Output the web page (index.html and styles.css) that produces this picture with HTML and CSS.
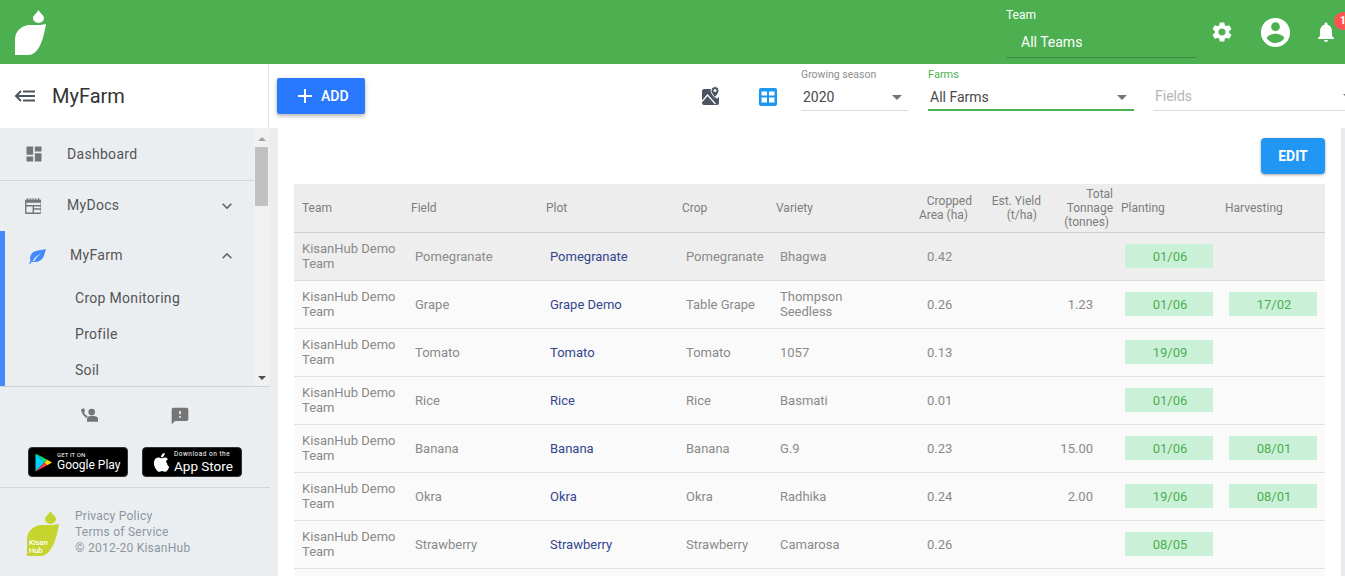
FILE: index.html
```html
<!DOCTYPE html>
<html lang="en">
<head>
<meta charset="utf-8">
<title>MyFarm</title>
<link rel="stylesheet" href="styles.css">
</head>
<body>
<div class="app">
  <header class="topbar">
    <svg class="logo" viewBox="0 0 32 46"><path d="M23.5 0C21.5 3.5 18 5.5 18 8a5.5 5 0 0 0 11 0C29 5.5 25.500 3.500 23.500 0z"/><path d="M31 14C24 15.500 20 15 13 15C6 16.500 0 21 0 30L0 45L13 45C23 45 28 32 31 14z"/></svg>
    <div class="team">
      <div class="team-label">Team</div>
      <div class="team-value">All Teams</div>
    </div>
    <svg class="ic-gear" viewBox="0 0 24 24"><path d="M19.14 12.94c.04-.3.06-.61.06-.94 0-.32-.02-.64-.07-.94l2.03-1.58c.18-.14.23-.41.12-.61l-1.92-3.32c-.12-.22-.37-.29-.59-.22l-2.39.96c-.5-.38-1.03-.7-1.62-.94l-.36-2.54c-.04-.24-.24-.41-.48-.41h-3.84c-.24 0-.43.17-.47.41l-.36 2.54c-.59.24-1.13.57-1.62.94l-2.39-.96c-.22-.08-.47 0-.59.22L2.74 8.87c-.12.21-.08.47.12.61l2.03 1.58c-.05.3-.09.63-.09.94s.02.64.07.94l-2.03 1.58c-.18.14-.23.41-.12.61l1.92 3.32c.12.22.37.29.59.22l2.39-.96c.5.38 1.03.7 1.62.94l.36 2.54c.05.24.24.41.48.41h3.84c.24 0 .44-.17.47-.41l.36-2.54c.59-.24 1.13-.56 1.62-.94l2.39.96c.22.08.47 0 .59-.22l1.92-3.32c.12-.22.07-.47-.12-.61l-2.01-1.58zM12 15.6c-1.98 0-3.6-1.62-3.6-3.6s1.62-3.6 3.6-3.6 3.6 1.62 3.6 3.6-1.62 3.6-3.6 3.6z"/></svg>
    <svg class="ic-account" viewBox="0 0 24 24"><path d="M12 2C6.48 2 2 6.48 2 12s4.48 10 10 10 10-4.48 10-10S17.52 2 12 2zm0 3c1.66 0 3 1.34 3 3s-1.34 3-3 3-3-1.34-3-3 1.34-3 3-3zm0 14.2c-2.5 0-4.71-1.28-6-3.22.03-1.99 4-3.08 6-3.08 1.99 0 5.97 1.09 6 3.08-1.29 1.94-3.5 3.22-6 3.22z"/></svg>
    <div class="bell">
      <svg viewBox="0 0 24 24"><path d="M12 22c1.100 0 2-.9 2-2h-4c0 1.100.9 2 2 2zm6-6v-5c0-3.070-1.630-5.640-4.500-6.320V4c0-.83-.67-1.500-1.500-1.500s-1.500.67-1.500 1.500v.68C7.640 5.360 6 7.920 6 11v5l-2 2v1h16v-1l-2-2z"/></svg>
      <span class="badge">1</span>
    </div>
  </header>

  <div class="subbar">
    <div class="page-title">
      <svg class="ic-back" viewBox="0 0 24 24"><path d="M8 7L3 12L8 17M3 12H22M10 7.500H22M10 16.500H22"/></svg>
      <span>MyFarm</span>
    </div>
    <div class="toolbar">
      <button class="btn-add"><svg viewBox="0 0 14 14"><path d="M6 0h2v6h6v2H8v6H6V8H0V6h6z"/></svg>ADD</button>
      <svg class="ic-map" viewBox="0 0 18 19"><path class="map-body" d="M2 3h9.500v5.500L15 13l2-2.500V17a2 2 0 0 1-2 2H2a2 2 0 0 1-2-2V5a2 2 0 0 1 2-2z"/><path class="map-line" d="M0 15.500L5.500 9L13.500 18"/><path class="map-pin" d="M13 0.500a4 4 0 0 0-4 4c0 2.800 4 7 4 7s4-4.200 4-7a4 4 0 0 0-4-4z"/><circle class="map-dot" cx="13" cy="4.500" r="1.500"/></svg>
      <svg class="ic-grid" viewBox="0 0 18 18"><path d="M2 0h14a2 2 0 0 1 2 2v14a2 2 0 0 1-2 2H2a2 2 0 0 1-2-2V2a2 2 0 0 1 2-2zm0.500 3.500v4H8v-4zm7.500 0v4h5.500v-4zM2.500 9.500v5H8v-5zm7.500 0v5h5.500v-5z" fill-rule="evenodd"/></svg>
      <div class="select select-season">
        <div class="select-label">Growing season</div>
        <div class="select-value"><span>2020</span><i class="caret"></i></div>
      </div>
      <div class="select select-farms">
        <div class="select-label">Farms</div>
        <div class="select-value"><span>All Farms</span><i class="caret"></i></div>
      </div>
      <div class="select select-fields">
        <div class="select-label">&nbsp;</div>
        <div class="select-value"><span>Fields</span><i class="caret"></i></div>
      </div>
    </div>
  </div>

  <div class="body">
    <aside class="sidebar">
      <div class="nav-wrap">
        <nav class="nav">
          <a class="nav-row nav-dash">
            <svg class="nav-ic" viewBox="0 0 24 24"><path d="M3 13h8V3H3v10zm0 8h8v-6H3v6zm10 0h8V11h-8v10zm0-18v6h8V3h-8z"/></svg>
            <span>Dashboard</span>
          </a>
          <a class="nav-row nav-docs">
            <svg class="nav-ic" viewBox="0 0 18 17"><path d="M1 1.500h1V0h1v1.500h2V0h1v1.500h2V0h1v1.500h2V0h1v1.500h2V0h1v1.500h1a1 1 0 0 1 1 1V16a1 1 0 0 1-1 1H1a1 1 0 0 1-1-1V2.500a1 1 0 0 1 1-1zM1.500 5v2.500h15V5zM1.500 9v6.500H8V9zm8 0v2h7V9zm0 3.500v3h7v-3z" fill-rule="evenodd"/></svg>
            <span>MyDocs</span>
            <svg class="chev" viewBox="0 0 24 24"><path d="M16.590 8.590L12 13.170 7.410 8.590 6 10l6 6 6-6z"/></svg>
          </a>
          <div class="nav-group">
            <a class="nav-row nav-farm">
              <svg class="leaf-ic" viewBox="0 0 18 16"><path d="M18 0C14 1.500 5 0.500 2 6C0.500 9 1 11 1.500 12.500L0 15.500L1.300 16L2.700 13.500C6 14.500 10 14 13 11.500C16 9 17 4 18 0zM4 12.500C6 9 9 6.500 13 4.500C10 7 7.500 9.500 5.500 13z" fill-rule="evenodd"/></svg>
              <span>MyFarm</span>
              <svg class="chev" viewBox="0 0 24 24"><path d="M12 8l-6 6 1.410 1.410L12 10.830l4.590 4.580L18 14z"/></svg>
            </a>
            <a class="nav-sub">Crop Monitoring</a>
            <a class="nav-sub">Profile</a>
            <a class="nav-sub">Soil</a>
          </div>
        </nav>
        <div class="scroll">
          <i class="scroll-up"></i>
          <div class="scroll-thumb"></div>
          <i class="scroll-down"></i>
        </div>
      </div>
      <div class="support">
        <div class="support-icons">
          <svg class="ic-callback" viewBox="0 0 18 18"><path d="M0 1.500L3 0L4 3L3 4.500C3.500 6 5 7.500 6.500 8L6 10C3 9 0.500 5 0 1.500z"/><circle cx="10.700" cy="4" r="3.300"/><path d="M6 13.700V10.500C6 8.700 8.500 7.700 11 7.700S17 8.700 17 10.500V13.700z"/></svg>
          <svg class="ic-feedback" viewBox="0 0 24 24"><path d="M20 2H4c-1.100 0-1.990.9-1.990 2L2 22l4-4h14c1.100 0 2-.9 2-2V4c0-1.100-.9-2-2-2zm-7 12h-2v-2h2v2zm0-4h-2V6h2v4z"/></svg>
        </div>
        <div class="stores">
          <a class="store">
            <svg class="play" viewBox="0 0 18 20"><path fill="#00d2ff" d="M0.500 0.500V19.500L10 10z"/><path fill="#00e676" d="M0.500 0.500L13 7L10 10z"/><path fill="#ff3a44" d="M0.500 19.500L13 13L10 10z"/><path fill="#ffd400" d="M13 7L18 10L13 13L10 10z"/></svg>
            <span class="store-text"><small>GET IT ON</small><b class="gp">Google Play</b></span>
          </a>
          <a class="store">
            <svg class="apple" viewBox="0 0 17 20"><path d="M14 10.500c0-2.200 1.800-3.200 1.900-3.300-1-1.500-2.600-1.700-3.200-1.700-1.300-.1-2.600.8-3.300.8s-1.700-.8-2.900-.8C5 5.500 3.500 6.400 2.700 7.800 1 10.700 2.300 15 4 17.300c.8 1.200 1.700 2.500 3 2.400 1.200 0 1.700-.8 3.100-.8s1.900.8 3.100.8 2.100-1.200 2.800-2.300c.9-1.300 1.300-2.600 1.300-2.700-.1 0-2.300-1-2.300-4zM11.800 4c.6-.8 1.100-1.900 1-3-1 0-2.100.6-2.800 1.400-.6.7-1.100 1.800-1 2.900 1.100.1 2.200-.6 2.800-1.300z"/></svg>
            <span class="store-text"><small class="wide">Download on the</small><b class="as">App Store</b></span>
          </a>
        </div>
      </div>
      <footer class="legal">
        <svg class="lime" viewBox="0 0 32 46"><path d="M23.500 0C21.500 3.500 18 5.500 18 8a5.500 5 0 0 0 11 0C29 5.500 25.500 3.500 23.500 0z"/><path d="M32 13C24 14.500 20 14 13 14C6 15.500 0 20 0 29L0 45L13 45C23 45 29 32 32 13z"/><text class="lime-text" x="2" y="34">Kisan</text><text class="lime-text" x="2" y="42">Hub</text></svg>
        <div class="legal-text">
          <div>Privacy Policy</div>
          <div>Terms of Service</div>
          <div>© 2012-20 KisanHub</div>
        </div>
      </footer>
    </aside>

    <main class="main">
      <div class="main-actions"><button class="btn-edit">EDIT</button></div>
      <table class="grid">
        <colgroup>
          <col class="c-team"><col class="c-field"><col class="c-plot"><col class="c-crop"><col class="c-variety"><col class="c-area"><col class="c-yield"><col class="c-ton"><col class="c-plant"><col class="c-harv">
        </colgroup>
        <thead>
          <tr>
            <th>Team</th><th>Field</th><th>Plot</th><th>Crop</th><th>Variety</th>
            <th class="th-r">Cropped<br><span class="off">Area (ha)</span></th>
            <th class="th-r">Est. Yield<br><span class="off">(t/ha)</span></th>
            <th class="th-r th-flush">Total<br>Tonnage<br><span class="off">(tonnes)</span></th>
            <th>Planting</th><th>Harvesting</th>
          </tr>
        </thead>
        <tbody>
          <tr class="active"><td class="t">KisanHub Demo<br>Team</td><td>Pomegranate</td><td class="plot">Pomegranate</td><td>Pomegranate</td><td>Bhagwa</td><td class="area">0.42</td><td></td><td class="ton"></td><td><div class="date">01/06</div></td><td></td></tr>
          <tr><td class="t">KisanHub Demo<br>Team</td><td>Grape</td><td class="plot">Grape Demo</td><td>Table Grape</td><td class="var">Thompson<br>Seedless</td><td class="area">0.26</td><td></td><td class="ton">1.23</td><td><div class="date">01/06</div></td><td><div class="date">17/02</div></td></tr>
          <tr><td class="t">KisanHub Demo<br>Team</td><td>Tomato</td><td class="plot">Tomato</td><td>Tomato</td><td>1057</td><td class="area">0.13</td><td></td><td class="ton"></td><td><div class="date">19/09</div></td><td></td></tr>
          <tr><td class="t">KisanHub Demo<br>Team</td><td>Rice</td><td class="plot">Rice</td><td>Rice</td><td>Basmati</td><td class="area">0.01</td><td></td><td class="ton"></td><td><div class="date">01/06</div></td><td></td></tr>
          <tr><td class="t">KisanHub Demo<br>Team</td><td>Banana</td><td class="plot">Banana</td><td>Banana</td><td>G.9</td><td class="area">0.23</td><td></td><td class="ton">15.00</td><td><div class="date">01/06</div></td><td><div class="date">08/01</div></td></tr>
          <tr><td class="t">KisanHub Demo<br>Team</td><td>Okra</td><td class="plot">Okra</td><td>Okra</td><td>Radhika</td><td class="area">0.24</td><td></td><td class="ton">2.00</td><td><div class="date">19/06</div></td><td><div class="date">08/01</div></td></tr>
          <tr><td class="t">KisanHub Demo<br>Team</td><td>Strawberry</td><td class="plot">Strawberry</td><td>Strawberry</td><td>Camarosa</td><td class="area">0.26</td><td></td><td class="ton"></td><td><div class="date">08/05</div></td><td></td></tr>
          <tr><td class="t">&nbsp;</td><td></td><td></td><td></td><td></td><td></td><td></td><td></td><td></td><td></td></tr>
        </tbody>
      </table>
    </main>
    <div class="page-scroll"></div>
  </div>
</div>
</body>
</html>
```

FILE: styles.css
```css
* { box-sizing: border-box; }
html, body { margin: 0; height: 100%; overflow: hidden; }
body { font-family: Roboto, "Liberation Sans", sans-serif; background: #fff; color: #333; }
svg { display: block; flex-shrink: 0; }

.app { display: flex; flex-direction: column; width: 1345px; height: 576px; overflow: hidden; }

/* top bar */
.topbar { display: flex; align-items: center; height: 64px; flex-shrink: 0; background: #4caf50; color: #fff; padding-left: 15px; fill: #fff; overflow: hidden; }
.logo { width: 32px; height: 46px; margin-top: 1px; }
.team { width: 190px; height: 52px; margin-left: 959px; margin-top: -1px; border-bottom: 1px solid #3f8a43; flex-shrink: 0; }
.team-label { font-size: 12px; line-height: 14px; margin-top: 2px; }
.team-value { font-size: 14px; line-height: 18px; margin: 11px 0 0 15px; }
.ic-gear { width: 24px; height: 24px; margin-left: 14px; }
.ic-account { width: 35px; height: 35px; margin-left: 23.500px; }
.bell { position: relative; width: 24px; height: 24px; margin-left: 21.500px; flex-shrink: 0; }
.bell svg { width: 24px; height: 24px; }
.badge { position: absolute; left: 20px; top: -8px; width: 18px; height: 18px; border-radius: 50%; background: #ff5252; color: #fff; font-size: 11px; font-weight: 700; line-height: 18px; text-align: center; }

/* sub bar */
.subbar { display: flex; height: 64px; flex-shrink: 0; background: #fff; }
.page-title { display: flex; align-items: center; width: 269px; flex-shrink: 0; border-right: 1px solid #dfe2e5; padding-left: 13px; font-size: 20px; color: #333; }
.ic-back { width: 24px; height: 24px; fill: none; stroke: #4a5560; stroke-width: 2; margin-right: 15px; }
.toolbar { display: flex; align-items: flex-start; flex: 1; padding-left: 8px; min-width: 0; overflow: hidden; }
.btn-add { display: flex; align-items: center; gap: 9px; width: 88px; height: 36px; margin-top: 14px; flex-shrink: 0; border: 0; border-radius: 2px; background: #2979ff; color: #fff; font: 500 14px Roboto, sans-serif; box-shadow: 0 2px 4px rgba(0,0,0,.3); padding: 0 0 0 21px; }
.btn-add svg { width: 14px; height: 14px; fill: #fff; }
.ic-map { width: 18px; height: 19px; margin: 22px 0 0 337px; overflow: visible; }
.map-body { fill: #4a5560; }
.map-line { fill: none; stroke: #fff; stroke-width: 1.200; }
.map-pin { fill: #4a5560; stroke: #fff; stroke-width: 1; }
.map-dot { fill: #fff; }
.ic-grid { width: 18px; height: 18px; margin: 24px 0 0 39px; fill: #1c98f2; }

.select { flex-shrink: 0; height: 47px; border-bottom: 1px solid #dcdcdc; }
.select-label { font-size: 10.500px; line-height: 13px; margin-top: 4px; color: #8d8d8d; }
.select-value { display: flex; justify-content: space-between; align-items: center; margin-top: 6px; font-size: 14px; line-height: 20px; color: #4a4a4a; padding: 0 6px 0 2px; }
.caret { display: block; width: 0; height: 0; border: 5px solid transparent; border-top-color: #757575; border-bottom: 0; }
.select-season { width: 107px; margin-left: 24px; }
.select-farms { width: 206px; margin-left: 20px; border-bottom: 2px solid #4caf50; }
.select-farms .select-label { color: #4caf50; font-size: 11px; }
.select-farms .select-value { padding-right: 7px; }
.select-fields { width: 206px; margin-left: 19px; }
.select-fields .select-value { color: #b5b5b5; margin-top: 5px; }

/* body */
.body { display: flex; flex: 1; min-height: 0; }
.sidebar { display: flex; flex-direction: column; width: 278px; flex-shrink: 0; background: #ebeef1; }
.nav-wrap { display: flex; width: 270px; height: 259px; border-bottom: 1px solid #cfd3d6; flex-shrink: 0; }
.nav { width: 254px; height: 258px; overflow: hidden; font-size: 14px; letter-spacing: .3px; color: #555; }
.nav-row { display: flex; align-items: center; }
.nav-dash { height: 53px; padding: 0 0 0 24px; border-bottom: 1px solid #d2d6d9; }
.nav-docs { height: 50px; padding: 0 17px 0 25px; }
.nav-ic { width: 20px; height: 20px; margin-right: 23px; fill: #757575; }
.nav-docs .nav-ic { width: 17px; height: 16px; margin-right: 25px; }
.nav-row span { flex: 1; }
.nav-docs span, .nav-farm span { padding-bottom: 2px; }
.chev { width: 20px; height: 20px; fill: #666; }
.nav-group { border-left: 5px solid #448aff; height: 160px; }
.nav-farm { height: 49px; padding: 0 17px 0 24px; }
.leaf-ic { width: 17px; height: 15px; fill: #448aff; margin: 2px 24px 0 0; }
.nav-sub { display: block; height: 36px; line-height: 36px; padding-left: 70px; }
.scroll { display: flex; flex-direction: column; width: 15px; background: #f1f1f1; margin-right: 1px; }
.scroll-up, .scroll-down { display: block; width: 0; height: 0; }
.scroll-up { margin: 9px auto 6px; border: 4px solid transparent; border-top: 0; border-bottom: 4px solid #a3a3a3; }
.scroll-down { margin: auto auto 6px; border: 4px solid transparent; border-bottom: 0; border-top: 4px solid #505050; }
.scroll-thumb { height: 59px; margin: 0 1px; background: #c1c1c1; }

.support { width: 270px; height: 101px; border-bottom: 1px solid #d2d6d9; flex-shrink: 0; }
.support-icons { display: flex; gap: 71px; padding: 21px 0 0 81px; fill: #757575; height: 39px; }
.ic-callback { width: 18px; height: 18px; }
.ic-feedback { width: 20px; height: 20px; margin-top: -2px; }
.stores { display: flex; gap: 14px; margin: 21px 0 0 28px; }
.store { display: flex; align-items: center; width: 100px; height: 30px; border-radius: 4px; background: #000; border: 1px solid #333; color: #fff; padding-left: 6px; }
.play { width: 17px; height: 19px; }
.apple { width: 17px; height: 20px; fill: #fff; margin-left: 3px; }
.store-text { display: flex; flex-direction: column; margin-left: 5px; white-space: nowrap; }
.store-text small { font-size: 6px; line-height: 7px; letter-spacing: .1px; }
.store-text small.wide { font-size: 6.500px; letter-spacing: .5px; }
.store-text b { font-weight: 400; font-size: 12px; line-height: 15px; }
.store-text b.as { font-size: 13.500px; line-height: 16px; }

.legal { display: flex; padding: 20px 0 0 27px; }
.lime { width: 32px; height: 46px; fill: #c5d42f; margin-top: 3px; }
.lime-text { font: 500 7.500px Roboto, sans-serif; fill: #fff; }
.legal-text { margin-left: 16px; font-size: 12px; line-height: 16px; letter-spacing: .25px; color: #8c96a0; }

/* main */
.main { flex: 1; min-width: 0; padding: 10px 16px 0; overflow: hidden; background: #fff; }
.main-actions { display: flex; justify-content: flex-end; height: 46px; }
.btn-edit { width: 64px; height: 36px; border: 0; border-radius: 4px; background: #2196f3; color: #fff; font: 700 14px Roboto, sans-serif; box-shadow: 0 1px 3px rgba(0,0,0,.35); }
.page-scroll { width: 4px; flex-shrink: 0; background: #e9ecee; }

.grid { width: 1031px; table-layout: fixed; border-collapse: separate; border-spacing: 0; font-size: 13px; color: #8a8a8a; }
.c-team { width: 109px; } .c-field { width: 135px; } .c-plot { width: 136px; } .c-crop { width: 94px; } .c-variety { width: 137px; }
.c-area { width: 75px; } .c-yield { width: 69px; } .c-ton { width: 64px; } .c-plant { width: 104px; } .c-harv { width: 108px; }
th { height: 49px; padding: 0 0 0 8px; background: #ededed; border-bottom: 1px solid #cfcfcf; font-size: 12px; font-weight: 400; line-height: 14px; color: #7d7d7d; text-align: left; }
.th-r { text-align: right; padding: 0 8px 0 0; }
.th-flush { padding-right: 0; }
.off { display: inline-block; padding-right: 4px; }
td { height: 48px; padding: 0 0 0 12px; background: #fafafa; border-bottom: 1px solid #e2e2e2; line-height: 15px; vertical-align: middle; }
.active td { background: #eee; border-bottom-color: #dedede; }
td.t { padding: 0 0 2px 8px; }
td.var { padding-bottom: 2px; }
td.plot { color: #33468f; }
td.area { padding-left: 22px; }
td.ton { text-align: right; padding: 0 20px 0 0; }
.date { width: 88px; height: 24px; line-height: 25px; margin-bottom: 2px; padding-left: 2px; background: #cbf0d8; color: #4caf50; text-align: center; }
```
